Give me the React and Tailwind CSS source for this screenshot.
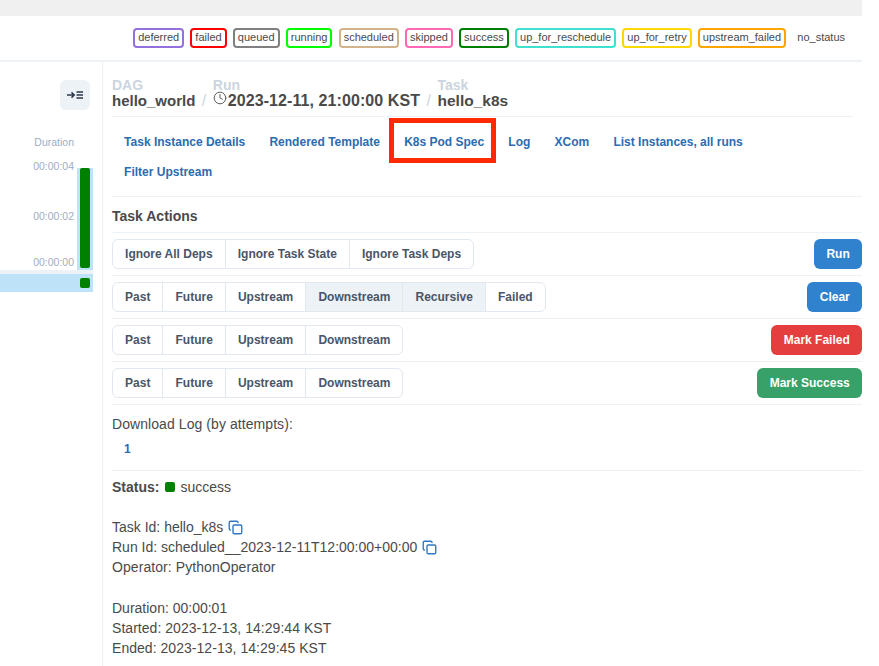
import { Clock, Copy } from 'lucide-react'

const STATES = [
  { label: 'deferred', border: 'border-[#9370db]' },
  { label: 'failed', border: 'border-[#ff0000]' },
  { label: 'queued', border: 'border-[#808080]' },
  { label: 'running', border: 'border-[#00ff00]' },
  { label: 'scheduled', border: 'border-[#d2b48c]' },
  { label: 'skipped', border: 'border-[#ff69b4]' },
  { label: 'success', border: 'border-[#008000]' },
  { label: 'up_for_reschedule', border: 'border-[#40e0d0]' },
  { label: 'up_for_retry', border: 'border-[#ffd700]' },
  { label: 'upstream_failed', border: 'border-[#ffa500]' },
]

const TABS = ['Task Instance Details', 'Rendered Template', 'K8s Pod Spec', 'Log', 'XCom', 'List Instances, all runs', 'Filter Upstream']

const ACTIONS = [
  { items: ['Ignore All Deps', 'Ignore Task State', 'Ignore Task Deps'], label: 'Run', color: 'bg-[#3182ce]' },
  { items: ['Past', 'Future', 'Upstream', 'Downstream', 'Recursive', 'Failed'], active: ['Downstream', 'Recursive'], label: 'Clear', color: 'bg-[#3182ce]' },
  { items: ['Past', 'Future', 'Upstream', 'Downstream'], label: 'Mark Failed', color: 'bg-[#e53e3e]' },
  { items: ['Past', 'Future', 'Upstream', 'Downstream'], label: 'Mark Success', color: 'bg-[#38a169]' },
]

function Crumb({ label, children, className = 'text-base' }) {
  return (
    <div className="flex flex-col">
      <span className="h-[13px] text-sm leading-[13px] font-bold text-[#cbd5e0]">{label}</span>
      <span className={`flex h-[17px] items-center leading-[17px] font-bold text-[#4a4a4a] ${className}`}>{children}</span>
    </div>
  )
}

function ActionRow({ row }) {
  return (
    <div className="flex items-center justify-between border-t border-[#edf2f7] py-[6px]">
      <div className="flex h-[30px] rounded-md border border-[#e2e8f0]">
        {row.items.map((item, i) => (
          <span
            key={item}
            className={`flex items-center px-[12.05px] text-xs font-bold text-[#4a5568] ${i > 0 ? 'border-l border-[#e2e8f0]' : ''} ${row.active?.includes(item) ? 'bg-[#edf2f7]' : ''}`}
          >
            {item}
          </span>
        ))}
      </div>
      <span className={`flex h-[30px] items-center rounded-md px-[12.25px] text-xs font-bold text-white ${row.color}`}>{row.label}</span>
    </div>
  )
}

export default function App() {
  return (
    <div className="h-[666px] w-[879px] overflow-hidden bg-white font-['Liberation_Sans',Arial,sans-serif] text-sm text-[#4a4a4a]">
      <div className="w-[862px]">
        <div className="h-4 bg-[#f0f0f0]" />
        <div className="flex h-[46px] items-center justify-end gap-[6.2px] border-b-2 border-[#edf2f7] pr-[14px] text-[11px]">
          {STATES.map((s) => (
            <span key={s.label} className={`flex h-5 items-center rounded-[4px] border-2 px-[3px] ${s.border}`}>{s.label}</span>
          ))}
          <span className="px-[3px] pl-[5px]">no_status</span>
        </div>

        <div className="flex">
          {/* Grid sidebar */}
          <div className="flex h-[604px] w-[102px] shrink-0 flex-col">
            <div className="mt-[18px] mr-[12px] flex h-[30px] w-[30px] items-center justify-center self-end rounded-md bg-[#edf2f7]">
              <svg width="16" height="8" viewBox="0 0 16 8" fill="none" stroke="#2d3748" strokeWidth="1.5">
                <path d="M0 4h7M4.5 1.4 7.2 4 4.5 6.6" />
                <path d="M9.5 1H16M9.5 4H16M9.5 7H16" />
              </svg>
            </div>
            <div className="mt-[26px] mr-[28px] text-right text-[10.5px] leading-3 text-[#a0aec0]">Duration</div>
            <div className="relative mt-[18px] h-[118px] w-[93px]">
              <div className="absolute top-[2px] right-0 h-[102px] w-4 bg-[#bee3f8]" />
              <div className="absolute top-[2px] right-[3px] h-[100px] w-[10px] rounded-[2px] bg-[#008000]" />
              <span className="absolute top-[-6px] right-[19px] text-[10.5px] leading-3 text-[#a0aec0]">00:00:04</span>
              <span className="absolute top-[44px] right-[19px] text-[10.5px] leading-3 text-[#a0aec0]">00:00:02</span>
              <span className="absolute top-[90px] right-[19px] text-[10.5px] leading-3 text-[#a0aec0]">00:00:00</span>
            </div>
            <div className="-mt-[14px] flex h-[4px] w-[93px] bg-[#edf2f7]" />
            <div className="flex h-[18px] w-[93px] items-center justify-end bg-[#bee3f8] pr-[3px]">
              <div className="h-[10px] w-[10px] rounded-[2px] bg-[#008000]" />
            </div>
          </div>

          {/* Details panel */}
          <div className="min-w-0 flex-1 border-l border-[#edf2f7] pt-[17px] pl-[9px]">
            <div className="mr-[9px] flex items-end border-b border-[#edf2f7] pb-[7px]">
              <Crumb label="DAG" className="text-[15px]">hello_world</Crumb>
              <span className="mx-[6.5px] text-base leading-[17px] text-[#cbd5e0]">/</span>
              <Crumb label="Run" className="text-base tracking-[0.08px]">
                <Clock size={14} strokeWidth={1.5} className="mr-[1px] mb-[5px]" />
                2023-12-11, 21:00:00 KST
              </Crumb>
              <span className="mx-[6.5px] text-base leading-[17px] text-[#cbd5e0]">/</span>
              <Crumb label="Task" className="text-[15.5px]">hello_k8s</Crumb>
            </div>

            <div className="flex flex-wrap border-b border-[#edf2f7] pt-[10px] pb-[9px]">
              {TABS.map((tab) => (
                <span key={tab} className="relative flex h-[30px] items-center px-[12.1px] text-xs font-bold text-[#2b6cb0]">
                  {tab}
                  {tab === 'K8s Pod Spec' && <span className="absolute -top-[9px] right-0 -bottom-[6px] -left-[3px] border-[5px] border-[#ff2a00]" />}
                </span>
              ))}
            </div>

            <div className="pt-[11px] pb-[8px] text-sm leading-4 font-bold text-[#4a4a4a]">Task Actions</div>
            {ACTIONS.map((row) => <ActionRow key={row.label} row={row} />)}

            <div className="border-t border-[#edf2f7] pt-[9px]">
              <div className="leading-5 tracking-[0.07px]">Download Log (by attempts):</div>
              <div className="mt-[5px] mb-[11px] pl-3 text-xs leading-5 font-bold text-[#2b6cb0]">1</div>
            </div>

            <div className="border-t border-[#edf2f7] pt-[6px] leading-5">
              <div className="flex items-center">
                <span className="font-bold">Status:</span>
                <span className="mr-[5px] ml-[6px] h-[10px] w-[10px] rounded-[2px] bg-[#008000]" />
                success
              </div>
              <div className="mt-[20px]">
                <div className="flex items-center">Task Id: hello_k8s <Copy size={15} strokeWidth={2.2} className="ml-[5px] text-[#2f77c4]" /></div>
                <div className="flex items-center">Run Id: scheduled__2023-12-11T12:00:00+00:00 <Copy size={15} strokeWidth={2.2} className="ml-[5px] text-[#2f77c4]" /></div>
                <div className="tracking-[0.07px]">Operator: PythonOperator</div>
              </div>
              <div className="mt-[21px]">
                <div>Duration: 00:00:01</div>
                <div className="tracking-[0.04px]">Started: 2023-12-13, 14:29:44 KST</div>
                <div className="tracking-[0.04px]">Ended: 2023-12-13, 14:29:45 KST</div>
              </div>
            </div>
          </div>
        </div>
      </div>
    </div>
  )
}
